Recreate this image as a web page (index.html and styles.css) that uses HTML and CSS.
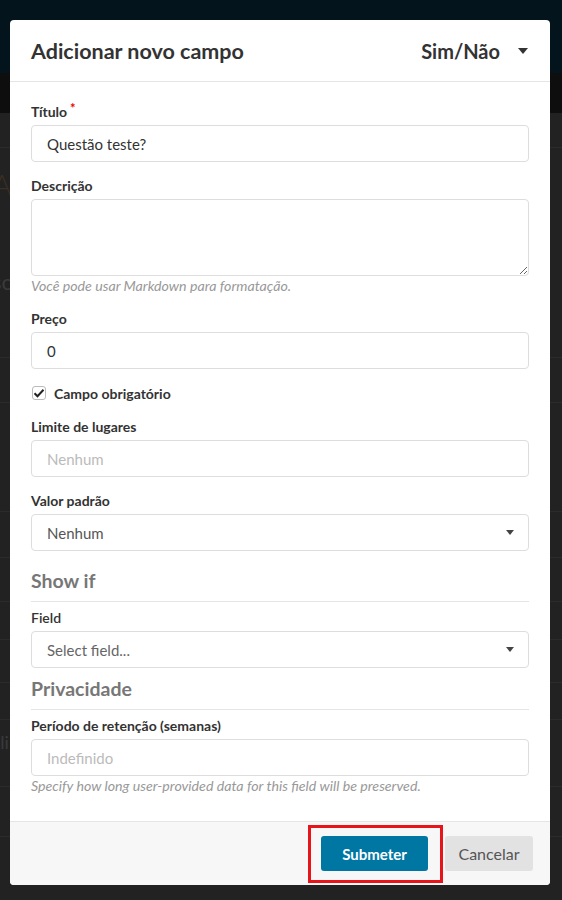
FILE: index.html
```html
<!DOCTYPE html>
<html lang="pt">
<head>
  <meta charset="UTF-8">
  <meta name="viewport" content="width=device-width, initial-scale=1.0">
  <title>Adicionar novo campo</title>
  <link rel="stylesheet" href="styles.css">
</head>
<body>

  <div class="page">
    <div class="navbar"></div>
    <div class="subbar"></div>
    <div class="rows">
      <div class="row r1"></div>
      <div class="row r2">
        <span class="ghost ghost-a">A</span>
        <span class="ghost ghost-sc">sc</span>
      </div>
      <div class="row r3"></div>
      <div class="row r4"></div>
      <div class="row r5"></div>
      <div class="row r6"></div>
      <div class="row r7"></div>
      <div class="row r8"></div>
      <div class="row r9"></div>
      <div class="row r10"><span class="ghost ghost-ili">ili</span></div>
      <div class="row r11"></div>
    </div>
  </div>

  <div class="backdrop">
    <div class="modal">
      <div class="modal-header">
        <h2 class="modal-title">Adicionar novo campo</h2>
        <div class="type-select">
          Sim/Não
          <svg class="caret-big" width="10" height="6" viewBox="0 0 10 6"><path d="M0 0h10L5 6z" fill="#333"/></svg>
        </div>
      </div>

      <div class="modal-body">
        <div class="form-group">
          <label>Título<sup class="req">*</sup></label>
          <input type="text" class="form-control" value="Questão teste?">
        </div>

        <div class="form-group">
          <label>Descrição</label>
          <textarea class="form-control textarea"></textarea>
          <p class="help">Você pode usar Markdown para formatação.</p>
        </div>

        <div class="form-group">
          <label>Preço</label>
          <input type="text" class="form-control" value="0">
        </div>

        <div class="form-group check-row">
          <span class="checkbox">
            <svg width="12" height="10" viewBox="0 0 12 10"><path d="M1.5 5.2l3 3L10.5 1.8" fill="none" stroke="#222" stroke-width="2"/></svg>
          </span>
          <span class="check-label">Campo obrigatório</span>
        </div>

        <div class="form-group">
          <label>Limite de lugares</label>
          <input type="text" class="form-control" placeholder="Nenhum">
        </div>

        <div class="form-group">
          <label>Valor padrão</label>
          <div class="form-control select">
            <span>Nenhum</span>
            <svg width="8" height="5" viewBox="0 0 8 5"><path d="M0 0h8L4 5z" fill="#444"/></svg>
          </div>
        </div>

        <h3 class="section first">Show if</h3>

        <div class="form-group tight">
          <label class="light">Field</label>
          <div class="form-control select">
            <span class="muted">Select field...</span>
            <svg width="8" height="5" viewBox="0 0 8 5"><path d="M0 0h8L4 5z" fill="#444"/></svg>
          </div>
        </div>

        <h3 class="section">Privacidade</h3>

        <div class="form-group last">
          <label>Período de retenção (semanas)</label>
          <input type="text" class="form-control" placeholder="Indefinido">
          <p class="help">Specify how long user-provided data for this field will be preserved.</p>
        </div>
      </div>

      <div class="modal-footer">
        <div class="highlight-wrap">
          <button class="btn btn-primary">Submeter</button>
          <span class="highlight"></span>
        </div>
        <button class="btn btn-default">Cancelar</button>
      </div>
    </div>
  </div>

</body>
</html>
```

FILE: styles.css
```css
* {
  box-sizing: border-box;
}

body {
  margin: 0;
  font-family: Lato, "Open Sans", sans-serif;
  background: #222;
  color: #333;
  height: 900px;
  overflow: hidden;
}

/* dimmed page behind the modal */
.page {
  height: 900px;
}

.navbar {
  height: 73px;
  background: #03141c;
}

.subbar {
  height: 40px;
  background: #0e0e0e;
}

.row {
  border-bottom: 1px solid #2b2b2b;
  position: relative;
}

.r1 { height: 35px; }
.r2 { height: 210px; }
.r3 { height: 45px; }
.r4 { height: 109px; }
.r5 { height: 46px; }
.r6 { height: 44px; }
.r7 { height: 38px; }
.r8 { height: 43px; }
.r9 { height: 37px; }
.r10 { height: 67px; }
.r11 { height: 50px; }

.ghost {
  position: absolute;
  left: -6px;
  color: #3a3a3a;
  font-size: 22px;
  line-height: 24px;
}

.ghost-a {
  top: 20px;
  left: -8px;
  color: #3b2e22;
  font-size: 30px;
  line-height: 32px;
  font-weight: 300;
}

.ghost-sc {
  top: 122px;
  left: -8px;
}

.ghost-ili {
  top: 10px;
  left: -4px;
  font-size: 18px;
}

.backdrop {
  position: absolute;
  top: 0;
  left: 0;
  right: 0;
  bottom: 0;
}

.modal {
  position: absolute;
  top: 20px;
  left: 10px;
  width: 540px;
  background: #fff;
  border-radius: 4px;
  overflow: hidden;
}

.modal-header {
  height: 62px;
  padding: 0 22px 0 21px;
  border-bottom: 1px solid #e5e5e5;
  display: flex;
  align-items: center;
  justify-content: space-between;
}

.modal-title {
  margin: 0;
  font-size: 21.5px;
  font-weight: 700;
  color: #333;
}

.type-select {
  font-size: 20px;
  font-weight: 700;
  color: #333;
  display: flex;
  align-items: center;
}

.caret-big {
  margin-left: 18px;
}

.modal-body {
  padding: 20px 21px 26px;
}

.form-group {
  margin-bottom: 14px;
}

.form-group.tight {
  margin-bottom: 9px;
}

.form-group.last {
  margin-bottom: 0;
}

label {
  display: block;
  font-size: 14px;
  font-weight: 700;
  line-height: 20px;
  margin-bottom: 3px;
  color: #333;
}

label.light {
  font-weight: 600;
}

.req {
  color: #e00;
  font-size: 13px;
  margin-left: 3px;
  vertical-align: 4px;
  line-height: 0;
}

.form-control {
  display: block;
  width: 100%;
  height: 37px;
  padding: 0 15px;
  border: 1px solid #ddd;
  border-radius: 4px;
  font-family: inherit;
  font-size: 15px;
  color: #333;
  background: #fff;
}

.form-control::placeholder {
  color: #bbb;
}

.textarea {
  height: 77px;
  resize: vertical;
}

.select {
  display: flex;
  align-items: center;
  justify-content: space-between;
  color: #555;
  padding-right: 14px;
}

.select .muted {
  color: #666;
}

.help {
  margin: 1px 0 0;
  font-size: 14.2px;
  line-height: 18px;
  font-style: italic;
  color: #999;
}

.check-row {
  display: flex;
  align-items: center;
  height: 20px;
}

.checkbox {
  width: 14px;
  height: 14px;
  border: 1px solid #bbb;
  border-radius: 3px;
  margin-left: 1px;
  display: flex;
  align-items: center;
  justify-content: center;
}

.check-label {
  margin-left: 8px;
  font-size: 14px;
  font-weight: 700;
}

.section {
  margin: 0 0 6px;
  padding-bottom: 8px;
  border-bottom: 1px solid #e5e5e5;
  font-size: 19.5px;
  line-height: 24px;
  font-weight: 700;
  color: #777;
}

.section.first {
  margin-top: 18px;
}

.modal-footer {
  border-top: 1px solid #e5e5e5;
  background: #f7f7f7;
  padding: 14px 17px 14px;
  display: flex;
  justify-content: flex-end;
  align-items: center;
  gap: 17px;
}

.btn {
  height: 35px;
  border: none;
  border-radius: 3px;
  font-family: inherit;
  font-size: 15px;
  cursor: pointer;
}

.btn-primary {
  width: 107px;
  background: #0077a3;
  color: #fff;
  font-weight: 700;
}

.btn-default {
  width: 88px;
  background: #e2e2e2;
  color: #555;
  font-size: 16px;
}

.highlight-wrap {
  position: relative;
  display: flex;
}

.highlight {
  position: absolute;
  top: -11px;
  bottom: -12px;
  left: -13px;
  right: -15px;
  border: 3px solid #e8141c;
}
```
